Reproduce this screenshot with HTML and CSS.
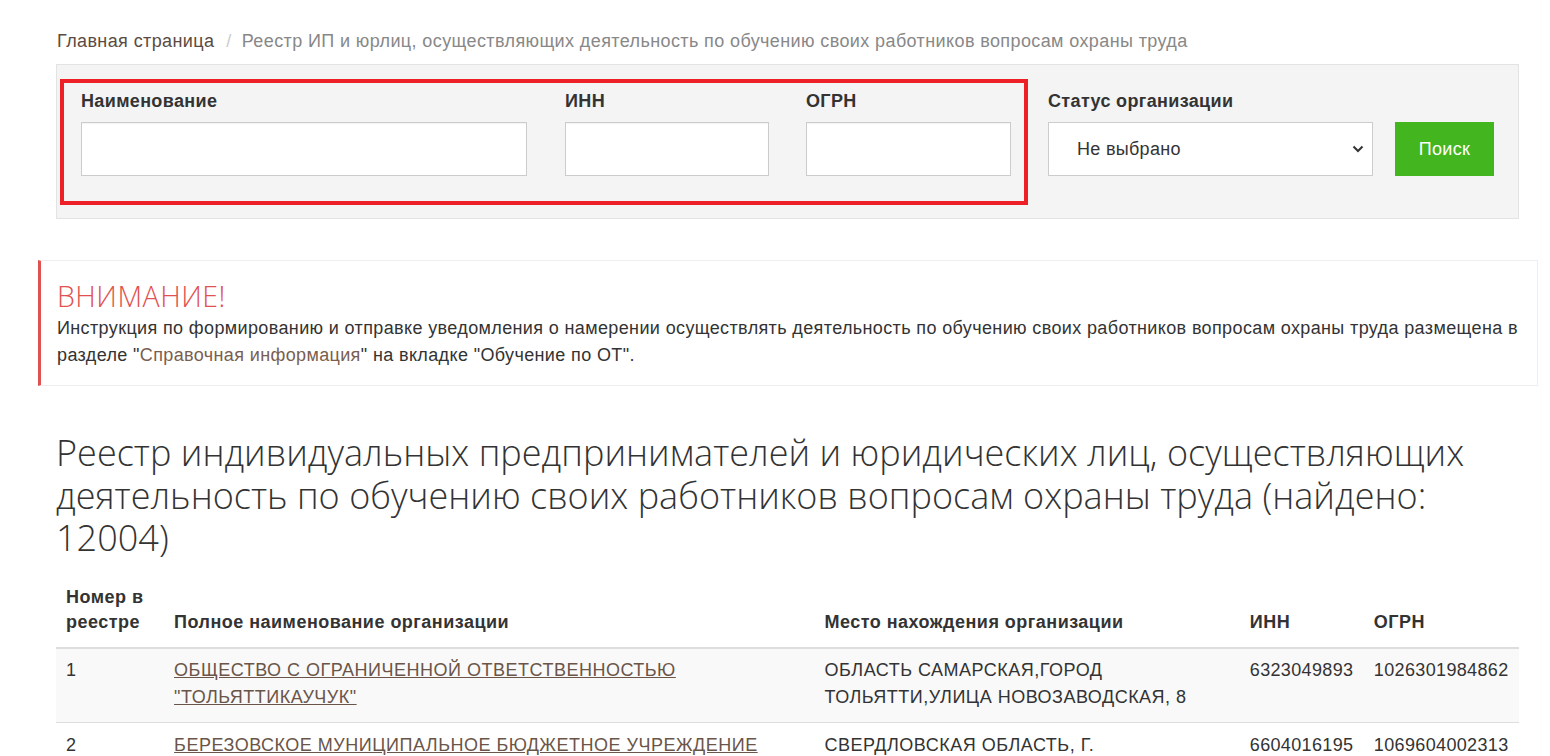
FILE: index.html
```html
<!DOCTYPE html>
<html lang="ru">
<head>
<meta charset="utf-8">
<title>Реестр</title>
<link rel="stylesheet" href="styles.css">
</head>
<body>
<div class="page">
  <nav class="breadcrumb">
    <a class="crumb-home" href="#">Главная страница</a>
    <span class="crumb-sep">/</span>
    <span class="crumb-current">Реестр ИП и юрлиц, осуществляющих деятельность по обучению своих работников вопросам охраны труда</span>
  </nav>

  <form class="filter">
    <div class="highlight">
      <div class="field field-name">
        <label>Наименование</label>
        <input type="text">
      </div>
      <div class="field field-inn">
        <label>ИНН</label>
        <input type="text">
      </div>
      <div class="field field-ogrn">
        <label>ОГРН</label>
        <input type="text">
      </div>
    </div>
    <div class="field field-status">
      <label>Статус организации</label>
      <div class="select">
        <span>Не выбрано</span>
        <svg class="chev" width="12" height="8" viewBox="0 0 12 8"><path d="M1.5 1.5 L6 6 L10.5 1.5" fill="none" stroke="#333" stroke-width="2"/></svg>
      </div>
    </div>
    <button type="button" class="btn-search">Поиск</button>
  </form>
</div>

<div class="alert">
  <div class="alert-title">ВНИМАНИЕ!</div>
  <p>Инструкция по формированию и отправке уведомления о намерении осуществлять деятельность по обучению своих работников вопросам охраны труда размещена в разделе "<a href="#">Справочная информация</a>" на вкладке "Обучение по ОТ".</p>
</div>

<div class="page">
  <h1 class="title">Реестр индивидуальных предпринимателей и юридических лиц, осуществляющих деятельность по обучению своих работников вопросам охраны труда (найдено: 12004)</h1>

  <table class="registry">
    <colgroup>
      <col class="w-num">
      <col class="w-name">
      <col class="w-addr">
      <col class="w-inn">
      <col class="w-ogrn">
    </colgroup>
    <thead>
      <tr>
        <th>Номер в реестре</th>
        <th>Полное наименование организации</th>
        <th>Место нахождения организации</th>
        <th>ИНН</th>
        <th>ОГРН</th>
      </tr>
    </thead>
    <tbody>
      <tr class="odd">
        <td>1</td>
        <td><a href="#">ОБЩЕСТВО С ОГРАНИЧЕННОЙ ОТВЕТСТВЕННОСТЬЮ "ТОЛЬЯТТИКАУЧУК"</a></td>
        <td>ОБЛАСТЬ САМАРСКАЯ,ГОРОД ТОЛЬЯТТИ,УЛИЦА НОВОЗАВОДСКАЯ, 8</td>
        <td class="num">6323049893</td>
        <td class="num">1026301984862</td>
      </tr>
      <tr>
        <td>2</td>
        <td><a href="#">БЕРЕЗОВСКОЕ МУНИЦИПАЛЬНОЕ БЮДЖЕТНОЕ УЧРЕЖДЕНИЕ "ЦЕНТР ОБЕСПЕЧЕНИЯ"</a></td>
        <td>СВЕРДЛОВСКАЯ ОБЛАСТЬ, Г. БЕРЕЗОВСКИЙ</td>
        <td class="num">6604016195</td>
        <td class="num">1069604002313</td>
      </tr>
    </tbody>
  </table>
</div>
</body>
</html>
```

FILE: styles.css
```css
html, body {
  margin: 0;
  padding: 0;
  background: #fff;
}
body {
  font-family: "Liberation Sans", Arial, sans-serif;
  font-size: 18px;
  letter-spacing: 0.3px;
  color: #333;
  overflow: hidden;
}
.page {
  padding: 0 31px 0 56px;
}
.breadcrumb {
  padding: 30px 0 0 1px;
  height: 64px;
  box-sizing: border-box;
  font-size: 18px;
  letter-spacing: 0.39px;
  line-height: 22px;
  display: flex;
}
.crumb-home {
  color: #5b4b42;
  text-decoration: none;
}
.crumb-sep {
  color: #ccc;
  padding: 0 10px 0 12px;
}
.crumb-current {
  color: #888;
}
.filter {
  background: #f4f4f4;
  border: 1px solid #e3e3e3;
  height: 155px;
  box-sizing: border-box;
  padding: 14px 0 0 3px;
  display: flex;
  align-items: flex-start;
}
.highlight {
  border: 4px solid #ed1f27;
  width: 968px;
  height: 126px;
  box-sizing: border-box;
  display: flex;
  padding: 7px 0 0 17px;
}
.field label {
  display: block;
  font-weight: bold;
  font-size: 18px;
  letter-spacing: 0.35px;
  line-height: 22px;
  height: 22px;
  margin-bottom: 10px;
  color: #333;
}
.field input {
  display: block;
  box-sizing: border-box;
  height: 54px;
  border: 1px solid #ccc;
  background: #fff;
  margin: 0;
  padding: 0 12px;
  box-shadow: inset 0 1px 1px rgba(0,0,0,0.05);
}
.field-name input { width: 446px; }
.field-inn { margin-left: 38px; }
.field-inn input { width: 204px; }
.field-ogrn { margin-left: 37px; }
.field-ogrn input { width: 205px; }
.field-status {
  margin-left: 20px;
  padding-top: 11px;
}
.select {
  width: 325px;
  height: 54px;
  box-sizing: border-box;
  border: 1px solid #ccc;
  background: #fff;
  display: flex;
  align-items: center;
  justify-content: space-between;
  padding: 0 8px 0 28px;
  font-size: 18px;
  color: #333;
}
.chev { display: block; }
.btn-search {
  margin: 43px 0 0 22px;
  width: 99px;
  height: 54px;
  border: 0;
  background: #43b51f;
  color: #fff;
  font-family: "Liberation Sans", Arial, sans-serif;
  font-size: 18px;
  letter-spacing: 0.3px;
  padding: 0;
}
.alert {
  margin: 41px 12px 0 38px;
  border: 1px solid #eee;
  border-left: 3px solid #e0524f;
  height: 126px;
  box-sizing: border-box;
  padding: 20px 6px 0 16px;
}
.alert-title {
  font-family: "Open Sans", sans-serif;
  font-weight: 300;
  font-size: 28.5px;
  line-height: 30px;
  color: #e0524f;
  letter-spacing: 0.5px;
}
.alert p {
  margin: 4px 0 0;
  font-size: 18px;
  letter-spacing: 0.37px;
  line-height: 27px;
}
.alert a {
  color: #7a5e4f;
  text-decoration: none;
}
.title {
  font-family: "Open Sans", sans-serif;
  font-weight: 300;
  font-size: 36px;
  line-height: 42.5px;
  color: #333;
  margin: 46px 0 0;
  letter-spacing: 0.03px;
}
.registry {
  margin-top: 17px;
  width: 100%;
  table-layout: fixed;
  border-collapse: collapse;
  font-size: 18px;
  letter-spacing: 0.5px;
}
.w-num { width: 108px; }
.w-name { width: 650px; }
.w-addr { width: 425px; }
.w-inn { width: 124px; }
.w-ogrn { width: 155px; }
.registry th {
  text-align: left;
  vertical-align: bottom;
  font-weight: bold;
  line-height: 25px;
  letter-spacing: 0.48px;
  padding: 8px 10px 12px;
  border-bottom: 2px solid #ddd;
}
.registry td {
  vertical-align: top;
  line-height: 27px;
  padding: 8.5px 10px 11px;
  border-bottom: 1px solid #ddd;
}
.registry td.num { letter-spacing: 0.35px; }
.registry tr.odd td { background: #f9f9f9; }
.registry a {
  color: #6b5548;
  text-decoration: underline;
}
```
